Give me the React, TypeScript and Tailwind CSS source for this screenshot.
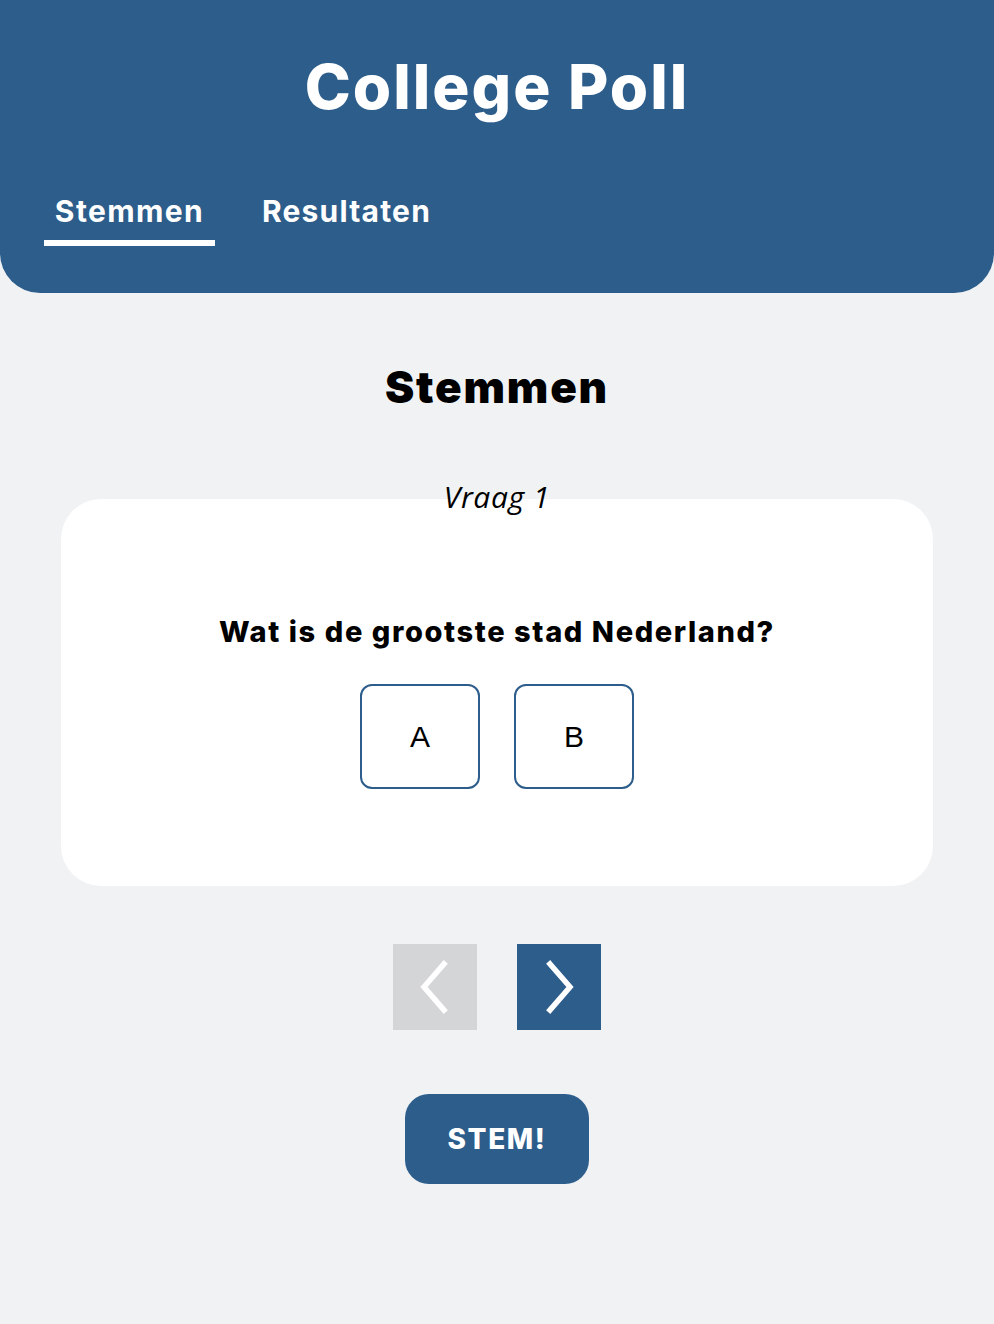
import React from "react";

export default function App() {
  const font = { fontFamily: "Inter, 'Noto Sans', sans-serif" };
  return (
    <div className="min-h-[1324px] w-full bg-[#f0f2f4]" style={font}>
      <header className="h-[293px] bg-[#2c5d8b] rounded-b-[40px] flex flex-col">
        <h1 className="pt-[50px] text-center text-white text-[62px] leading-[74px] font-extrabold tracking-[2px]">
          College Poll
        </h1>
        <nav className="mt-[69px] flex pl-[34px] gap-[12px]">
          <div className="px-[10px] flex flex-col items-center">
            <span className="text-white text-[30px] leading-[36px] font-bold tracking-[1.4px]">Stemmen</span>
            <span className="mt-[11px] h-[6px] w-[171px] bg-white" />
          </div>
          <div className="px-[25px]">
            <span className="text-white text-[30px] leading-[36px] font-bold tracking-[1.2px]">Resultaten</span>
          </div>
        </nav>
      </header>
      <main className="flex flex-col items-center">
        <h2 className="mt-[68px] text-[44px] leading-[52px] font-black text-black tracking-[1.8px]">Stemmen</h2>
        <div className="mt-[86px] w-[872px] relative">
          <div className="absolute left-0 right-0 -top-[20px] text-center italic text-[30px] leading-[36px] text-black z-10 tracking-[0.6px]" style={{ fontFamily: "'Open Sans', sans-serif" }}>
            Vraag 1
          </div>
          <div className="bg-white rounded-[40px] h-[387px] flex flex-col items-center pt-[114px]">
            <p className="text-[29px] leading-[38px] font-extrabold text-black tracking-[1.6px]">Wat is de grootste stad Nederland?</p>
            <div className="mt-[33px] flex gap-[34px]">
              {["A", "B"].map((l) => (
                <button
                  key={l}
                  className="w-[120px] h-[105px] rounded-[12px] border-2 border-[#2c5d8b] bg-white flex items-center justify-center text-[30px] text-black"
                  style={{ fontFamily: "'Liberation Sans', Arial, sans-serif" }}
                >
                  {l}
                </button>
              ))}
            </div>
          </div>
        </div>
        <div className="mt-[58px] flex gap-[40px]">
          <button className="w-[84px] h-[86px] bg-[#d4d5d7] flex items-center justify-center">
            <svg width="40" height="56" viewBox="0 0 40 56" fill="none">
              <path d="M29 5 L9 28 L29 51" stroke="white" strokeWidth="5.5" strokeLinecap="square" />
            </svg>
          </button>
          <button className="w-[84px] h-[86px] bg-[#2c5d8b] flex items-center justify-center">
            <svg width="40" height="56" viewBox="0 0 40 56" fill="none">
              <path d="M11 5 L31 28 L11 51" stroke="white" strokeWidth="5.5" strokeLinecap="square" />
            </svg>
          </button>
        </div>
        <button className="mt-[64px] w-[184px] h-[90px] rounded-[24px] bg-[#2c5d8b] text-white text-[28px] font-extrabold tracking-[1.6px]">
          STEM!
        </button>
      </main>
    </div>
  );
}
